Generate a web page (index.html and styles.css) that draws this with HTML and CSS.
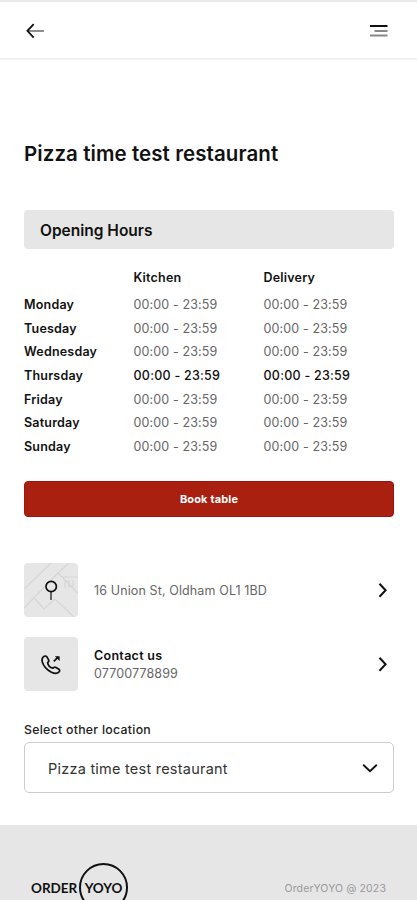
FILE: index.html
```html
<!DOCTYPE html>
<html lang="en">
<head>
<meta charset="utf-8">
<title>Pizza time test restaurant</title>
<link rel="stylesheet" href="styles.css">
</head>
<body>
<header class="topbar">
  <svg class="back" width="20" height="18" viewBox="0 0 20 18" fill="none"><path d="M3 9H19" stroke="#888" stroke-width="1.9"/><path d="M8.7 2.2L2.4 8.8L8.7 15.6" stroke="#111" stroke-width="1.8"/></svg>
  <svg class="menu" width="18" height="14" viewBox="0 0 18 14"><path d="M0 2H17.5" stroke="#111" stroke-width="2"/><path d="M4.5 7H17.5M0 11.5H17.5" stroke="#888" stroke-width="2.2"/></svg>
</header>
<main class="content">
  <h1 class="title">Pizza time test restaurant</h1>
  <h2 class="section-title"><span>Opening Hours</span></h2>
  <div class="hours">
    <div class="row head"><span></span><b>Kitchen</b><b>Delivery</b></div>
    <div class="row"><b>Monday</b><span>00:00 - 23:59</span><span>00:00 - 23:59</span></div>
    <div class="row"><b>Tuesday</b><span>00:00 - 23:59</span><span>00:00 - 23:59</span></div>
    <div class="row"><b>Wednesday</b><span>00:00 - 23:59</span><span>00:00 - 23:59</span></div>
    <div class="row today"><b>Thursday</b><span>00:00 - 23:59</span><span>00:00 - 23:59</span></div>
    <div class="row"><b>Friday</b><span>00:00 - 23:59</span><span>00:00 - 23:59</span></div>
    <div class="row"><b>Saturday</b><span>00:00 - 23:59</span><span>00:00 - 23:59</span></div>
    <div class="row"><b>Sunday</b><span>00:00 - 23:59</span><span>00:00 - 23:59</span></div>
  </div>
  <button class="book">Book table</button>
  <div class="link">
    <svg class="tile" width="54" height="54" viewBox="0 0 54 54" fill="none"><path d="M0 26L27 0M34 10L54 30M34 10L45 0M0 45L34 10M11 36L20 46L31 36L50 54M41 17V25M45 17V25M49 17V24M38 14H54" stroke="#d5d5d5" stroke-width="1.2"/><path d="M27 29V37" stroke="#444" stroke-width="1.6"/><circle cx="27.2" cy="23.5" r="5.2" fill="#e6e6e6" stroke="#111" stroke-width="1.7"/></svg>
    <span class="address">16 Union St, Oldham OL1 1BD</span>
    <svg class="chevron" width="10" height="16" viewBox="0 0 10 16" fill="none"><path d="M1.5 1.7L7.6 8.2L1.5 14.7" stroke="#111" stroke-width="2"/></svg>
  </div>
  <div class="link contact">
    <svg class="tile" width="54" height="54" viewBox="0 0 54 54" fill="none"><path d="M19.2 20C20.5 18.8 22 18.6 22.8 19.8L24.5 22.6C25.2 23.8 24.7 24.8 23.6 25.6C24 28.2 26.3 30.6 29 31.2C29.8 30.1 31 29.8 32 30.4L34.9 32.2C36 33 35.8 34.2 34.8 35.2C33 37 30.5 36.8 27 35C23 32.8 19.5 29 18.3 25C17.8 23 17.9 21.2 19.2 20Z" stroke="#111" stroke-width="1.7" stroke-linejoin="round"/><path d="M29.8 24.4L34 20.2" stroke="#111" stroke-width="1.7"/><path d="M30.8 19.2H35.6V24Z" fill="#111"/></svg>
    <div class="contact-text"><b>Contact us</b><span>07700778899</span></div>
    <svg class="chevron" width="10" height="16" viewBox="0 0 10 16" fill="none"><path d="M1.5 1.7L7.6 8.2L1.5 14.7" stroke="#111" stroke-width="2"/></svg>
  </div>
  <div class="label">Select other location</div>
  <div class="select"><span>Pizza time test restaurant</span><svg width="16" height="10" viewBox="0 0 16 10" fill="none"><path d="M1.2 1.8L8 8.2L14.8 1.8" stroke="#111" stroke-width="1.9"/></svg></div>
</main>
<footer class="footer">
  <div class="logo"><span class="order">ORDER</span><span class="yoyo">YOYO</span></div>
  <span class="copyright">OrderYOYO @ 2023</span>
</footer>
</body>
</html>
```
FILE: styles.css
```css
* { box-sizing: border-box; }
body { margin: 0; height: 900px; overflow: hidden; display: flex; flex-direction: column; background: #fff; color: #111; font-family: Inter, "Liberation Sans", sans-serif; }
b { font-weight: 600; }
span, b { white-space: nowrap; }
.topbar { flex: none; height: 60px; padding: 1px 29.5px 0 24.5px; border-top: 2px solid #ebebeb; border-bottom: 2px solid #f2f2f2; display: flex; align-items: center; justify-content: space-between; }
.content { flex: none; height: 765px; padding: 78px 23px 0 24px; }
.title { margin: 0; height: 32px; line-height: 32px; font-size: 20.5px; letter-spacing: .08px; font-weight: 600; white-space: nowrap; }
.section-title { margin: 40px 0 0; height: 39px; padding-left: 16px; border-radius: 4px; background: #e6e6e6; font-size: 15.5px; line-height: 41px; font-weight: 600; }
.hours { margin-top: 17px; }
.row { display: grid; grid-template-columns: 109.5px 130px 1fr; height: 23.7px; line-height: 23.7px; font-size: 12.5px; letter-spacing: .2px; }
.row.head { height: 27px; line-height: 24px; }
.row span { color: #666; letter-spacing: .12px; }
.row.today span { color: #111; font-weight: 500; letter-spacing: .25px; }
.book { display: block; width: 100%; height: 36px; margin-top: 22px; padding: 0; border: 1px solid #a01410; border-radius: 4px; background: #aa2010; color: #fff; font: 700 11px Inter, sans-serif; letter-spacing: .15px; }
.link { margin-top: 46px; height: 54px; display: flex; align-items: center; gap: 16px; }
.link.contact { margin-top: 20px; }
.tile { flex: none; background: #e6e6e6; border-radius: 4px; }
.address, .contact-text span { font-size: 12.5px; color: #666; letter-spacing: .12px; }
.address { padding-top: 2px; }
.chevron { margin: 0 6.5px 0 auto; }
.contact-text { display: flex; flex-direction: column; padding-top: 2px; font-size: 12.5px; line-height: 18px; }
.contact-text b { letter-spacing: .3px; }
.label { margin-top: 30px; height: 21px; line-height: 18px; font-size: 12.3px; letter-spacing: .28px; font-weight: 500; color: #222; }
.select { height: 51px; padding: 2px 15.5px 0 23px; border: 1px solid #ccc; border-radius: 5px; display: flex; align-items: center; justify-content: space-between; font-size: 14.5px; letter-spacing: .23px; color: #333; }
.footer { flex: none; height: 75px; overflow: hidden; padding: 38px 31px 0; background: #e6e6e6; display: flex; align-items: flex-start; justify-content: space-between; }
.logo { display: flex; align-items: center; font: 700 13.5px Lato, sans-serif; }
.order { width: 46px; }
.yoyo { display: flex; align-items: center; justify-content: center; width: 49px; height: 49px; margin-left: 2px; border: 2px solid #111; border-radius: 50%; }
.copyright { font-size: 10.5px; letter-spacing: .12px; line-height: 51px; color: #999; }
```
